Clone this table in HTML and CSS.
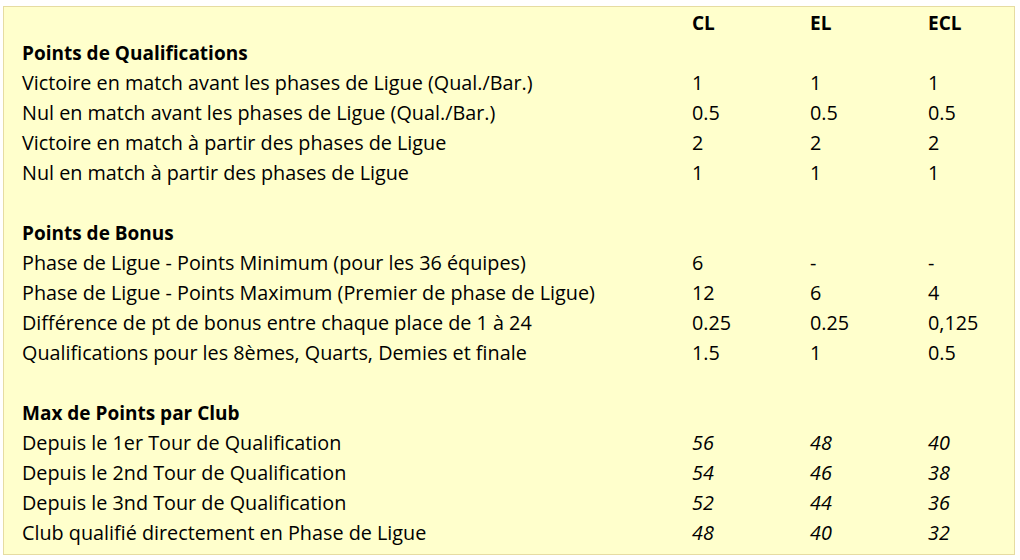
FILE: index.html
```html
<!DOCTYPE html>
<html lang="fr">
<head>
<meta charset="utf-8">
<link rel="stylesheet" href="styles.css">
</head>
<body>
<div class="sheet">
  <div class="grid">
    <div class="cell"></div><div class="cell b">CL</div><div class="cell b">EL</div><div class="cell b">ECL</div>
    <div class="cell b">Points de Qualifications</div><div class="cell"></div><div class="cell"></div><div class="cell"></div>
    <div class="cell">Victoire en match avant les phases de Ligue (Qual./Bar.)</div><div class="cell">1</div><div class="cell">1</div><div class="cell">1</div>
    <div class="cell">Nul en match avant les phases de Ligue (Qual./Bar.)</div><div class="cell">0.5</div><div class="cell">0.5</div><div class="cell">0.5</div>
    <div class="cell">Victoire en match à partir des phases de Ligue</div><div class="cell">2</div><div class="cell">2</div><div class="cell">2</div>
    <div class="cell">Nul en match à partir des phases de Ligue</div><div class="cell">1</div><div class="cell">1</div><div class="cell">1</div>
    <div class="cell"></div><div class="cell"></div><div class="cell"></div><div class="cell"></div>
    <div class="cell b">Points de Bonus</div><div class="cell"></div><div class="cell"></div><div class="cell"></div>
    <div class="cell">Phase de Ligue - Points Minimum (pour les 36 équipes)</div><div class="cell">6</div><div class="cell">-</div><div class="cell">-</div>
    <div class="cell">Phase de Ligue - Points Maximum (Premier de phase de Ligue)</div><div class="cell">12</div><div class="cell">6</div><div class="cell">4</div>
    <div class="cell">Différence de pt de bonus entre chaque place de 1 à 24</div><div class="cell">0.25</div><div class="cell">0.25</div><div class="cell">0,125</div>
    <div class="cell">Qualifications pour les 8èmes, Quarts, Demies et finale</div><div class="cell">1.5</div><div class="cell">1</div><div class="cell">0.5</div>
    <div class="cell"></div><div class="cell"></div><div class="cell"></div><div class="cell"></div>
    <div class="cell b">Max de Points par Club</div><div class="cell"></div><div class="cell"></div><div class="cell"></div>
    <div class="cell">Depuis le 1er Tour de Qualification</div><div class="cell i">56</div><div class="cell i">48</div><div class="cell i">40</div>
    <div class="cell">Depuis le 2nd Tour de Qualification</div><div class="cell i">54</div><div class="cell i">46</div><div class="cell i">38</div>
    <div class="cell">Depuis le 3nd Tour de Qualification</div><div class="cell i">52</div><div class="cell i">44</div><div class="cell i">36</div>
    <div class="cell">Club qualifié directement en Phase de Ligue</div><div class="cell i">48</div><div class="cell i">40</div><div class="cell i">32</div>
  </div>
</div>
</body>
</html>
```
FILE: styles.css
```css
html, body {
  margin: 0;
  padding: 0;
  background: #ffffff;
}
.sheet {
  margin: 6px 0 0 3px;
  width: 1010px;
  height: 547px;
  background: #ffffcc;
  border: 1px solid #e6dca2;
  font-family: "Open Sans", Lato, sans-serif;
  font-size: 19.8px;
  color: #000000;
}
.grid {
  display: grid;
  grid-template-columns: 670px 118px 118px 1fr;
  grid-auto-rows: 30px;
  padding: 1px 0 0 18px;
}
.cell {
  line-height: 30px;
  white-space: nowrap;
}
.b {
  font-weight: bold;
  font-size: 19px;
}
.i { font-style: italic; }
```
